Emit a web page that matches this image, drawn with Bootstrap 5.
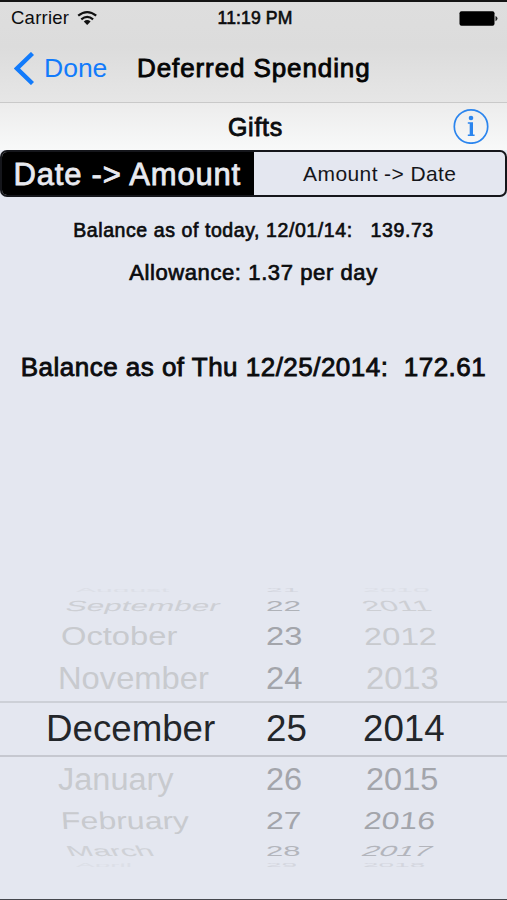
<!DOCTYPE html>
<html lang="en">
<head>
<meta charset="utf-8">
<meta name="viewport" content="width=device-width, initial-scale=1">
<title>Deferred Spending</title>
<link href="https://cdn.jsdelivr.net/npm/bootstrap@5.3.0/dist/css/bootstrap.min.css" rel="stylesheet">
<style>
body{font-family:"Liberation Sans",Arial,sans-serif;background:#e4e7f0;color:#0b0c0e;height:900px;overflow:hidden;line-height:1}
.screen{height:900px;border-top:2px solid #141414;border-bottom:1px solid #45474d}
.top-area{height:101px;background:linear-gradient(#dedede,#dcdcdc 45%,#e6e6e6);border-bottom:1px solid #c9c9c9}
.status{height:33px;padding:0 8px 0 11px;font-size:18.5px}
.carrier{letter-spacing:.25px}
.side{width:150px}
.medium{-webkit-text-stroke:.85px currentColor}
.clock{font-size:17.6px;letter-spacing:.1px;-webkit-text-stroke:.6px currentColor}
.title-bar{height:67px;padding-left:14px}
.back{color:#127bfb;font-size:26.5px;width:123px;gap:10px;text-decoration:none}
.page-title{font-size:26px;letter-spacing:.9px;color:#050505}
.account{height:47px;background:linear-gradient(#ececec,#f8f9f9)}
.account-name{font-size:25px;letter-spacing:.75px;padding-left:4px}
.info{right:18px;top:5px}
.segments{height:47px;border:2px solid #15161b;border-radius:7px;overflow:hidden}
.seg{background:transparent;color:#15161b;font-size:21px;letter-spacing:.4px;width:50%}
.seg.on{background:#000;color:#e8eaf0;font-size:31px;letter-spacing:.8px;-webkit-text-stroke:.8px currentColor;padding:1px 1px 0 0!important}
.seg:not(.on){padding:0 0 0 1px!important}
.line-a{font-size:19.5px;letter-spacing:.58px;-webkit-text-stroke:.65px currentColor;margin-top:23px;height:20px;line-height:20px;white-space:pre}
.line-b{font-size:22px;letter-spacing:.6px;-webkit-text-stroke:.7px currentColor;margin-top:22px;height:22px;line-height:22px}
.line-c{font-size:26px;letter-spacing:.48px;margin-top:69px;height:28px;line-height:28px;white-space:pre}
.wheel{margin-top:207px}
.wheel-row{height:var(--h);overflow:hidden;color:#c8cace}
.wheel-row>div{display:flex;align-items:center;height:var(--h);white-space:nowrap;flex:none}
.wheel-row span{display:inline-block;transform:translateY(var(--dy,0px)) scaleY(var(--sy)) skewX(var(--sk,0deg));font-size:var(--fs);line-height:1}
.c-month{width:266px;padding-left:var(--x)}
.c-day{width:97px;color:#a3a5ab}
.c-year{padding-left:var(--y,0)}
.r-a{--h:4px;--fs:30px;--sy:.17;--x:76px;opacity:.25}
.r-b{--h:26px;--fs:31.5px;--sy:.47;--x:66px;--sk:-10deg;--dy:1px;opacity:.8}
.r-c{--h:38px;--fs:32.7px;--sy:.76;--x:61px;--y:1px}
.r-d{--h:45px;--fs:32.7px;--sy:.94;--x:58px;--y:3px;--dy:1px}
.r-now{--h:52px;--fs:36.7px;--sy:1;--x:46px;height:56px;border-top:2px solid #cdd0d7;border-bottom:2px solid #c6c8d0}
.r-now,.r-now .c-day{color:#23262a}
.r-e{--h:45px;--fs:32.5px;--sy:.94;--x:58px;--y:3px;--dy:1px}
.r-f{--h:38px;--fs:32px;--sy:.76;--x:61px;--sk:3deg;--y:1px}
.r-g{--h:23px;--fs:31px;--sy:.47;--x:67px;--sk:14deg;opacity:.75}
.r-h{--h:4px;--fs:28px;--sy:.17;--x:76px;opacity:.25}
.later{color:#a3a5ab}
.upright{--sk:0deg}
.r-b .c-year{--sk:14deg}.r-c .c-year{--sk:3deg}
.r-f .later{--sk:-5deg}.r-g .later{--sk:-16deg}
</style>
<script src="https://cdn.jsdelivr.net/npm/bootstrap@5.3.0/dist/js/bootstrap.bundle.min.js"></script>
</head>
<body>
<div class="screen d-flex flex-column">
  <header class="top-area flex-shrink-0">
    <div class="status d-flex justify-content-between align-items-center">
      <div class="side d-flex align-items-center"><span class="carrier">Carrier</span>
        <svg class="ms-2" width="21" height="16" viewBox="0 0 21 16"><path d="M1.200 4.700Q10.200-2.400 19.200 4.700M4.300 8.300Q10.200 3.300 16.100 8.300" fill="none" stroke="#111" stroke-width="2.200"/><path d="M6.800 10.500Q10.200 7.700 13.600 10.500L10.200 14Z" fill="#111"/></svg>
      </div>
      <div class="clock">11:19 PM</div>
      <div class="side d-flex justify-content-end"><svg width="40" height="16" viewBox="0 0 40 16"><rect x=".5" y=".3" width="35" height="14.500" rx="2" fill="#000"/><path d="M36.500 5q2 .8 2 2.600t-2 2.600z" fill="#222"/></svg></div>
    </div>
    <nav class="title-bar d-flex align-items-center">
      <a class="back d-flex align-items-center" href="#"><svg width="20" height="33" viewBox="0 0 20 33"><path d="M18.500 1.500 3 16.500l15.500 15" fill="none" stroke="#127bfb" stroke-width="4.400"/></svg><span>Done</span></a>
      <h1 class="page-title medium m-0 fw-normal">Deferred Spending</h1>
    </nav>
  </header>
  <section class="account position-relative d-flex align-items-center justify-content-center flex-shrink-0">
    <h2 class="account-name medium m-0 fw-normal">Gifts</h2>
    <svg class="info position-absolute" width="36" height="36" viewBox="0 0 36 36"><circle cx="18" cy="18.500" r="16.700" fill="none" stroke="#2b85ee" stroke-width="1.700"/><circle cx="18" cy="10" r="2.300" fill="#2b85ee"/><path d="M14.800 14.200H20V26.500h1.600V28h-6.800v-1.500h1.900V15.700h-1.900z" fill="#2b85ee"/></svg>
  </section>
  <div class="segments d-flex flex-shrink-0">
    <button class="seg on border-0 p-0">Date -&gt; Amount</button>
    <button class="seg border-0 p-0">Amount -&gt; Date</button>
  </div>
  <main class="text-center">
    <p class="line-a mb-0">Balance as of today, 12/01/14:   139.73</p>
    <p class="line-b mb-0">Allowance: 1.37 per day</p>
    <p class="line-c medium mb-0">Balance as of Thu 12/25/2014:  172.61</p>
  </main>
  <div class="wheel">
    <div class="wheel-row d-flex r-a"><div class="c-month"><span>August</span></div><div class="c-day"><span>21</span></div><div class="c-year"><span>2010</span></div></div>
    <div class="wheel-row d-flex r-b"><div class="c-month"><span>September</span></div><div class="c-day upright"><span>22</span></div><div class="c-year"><span>2011</span></div></div>
    <div class="wheel-row d-flex r-c"><div class="c-month"><span>October</span></div><div class="c-day upright"><span>23</span></div><div class="c-year"><span>2012</span></div></div>
    <div class="wheel-row d-flex r-d"><div class="c-month"><span>November</span></div><div class="c-day"><span>24</span></div><div class="c-year"><span>2013</span></div></div>
    <div class="wheel-row d-flex r-now"><div class="c-month"><span>December</span></div><div class="c-day"><span>25</span></div><div class="c-year"><span>2014</span></div></div>
    <div class="wheel-row d-flex r-e"><div class="c-month"><span>January</span></div><div class="c-day"><span>26</span></div><div class="c-year later"><span>2015</span></div></div>
    <div class="wheel-row d-flex r-f"><div class="c-month"><span>February</span></div><div class="c-day upright"><span>27</span></div><div class="c-year later"><span>2016</span></div></div>
    <div class="wheel-row d-flex r-g"><div class="c-month"><span>March</span></div><div class="c-day upright"><span>28</span></div><div class="c-year later"><span>2017</span></div></div>
    <div class="wheel-row d-flex r-h"><div class="c-month"><span>April</span></div><div class="c-day"><span>29</span></div><div class="c-year later"><span>2018</span></div></div>
  </div>
</div>
</body>
</html>
